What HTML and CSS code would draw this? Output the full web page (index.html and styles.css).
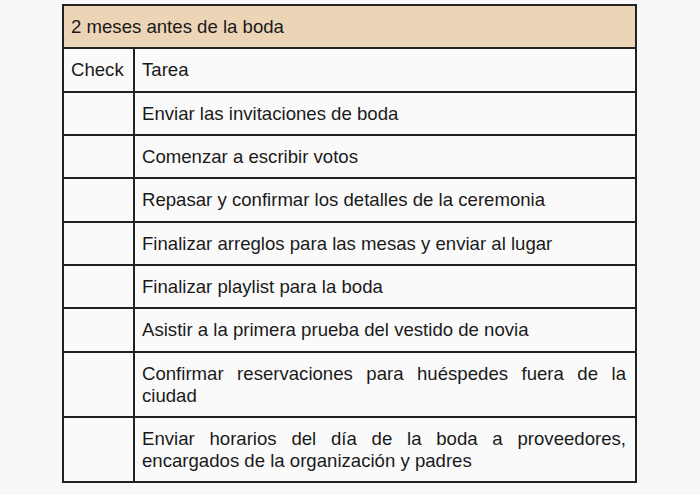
FILE: index.html
```html
<!DOCTYPE html>
<html lang="es">
<head>
<meta charset="utf-8">
<link rel="stylesheet" href="styles.css">
</head>
<body>
<table class="plan">
  <colgroup><col class="c-check"><col class="c-task"></colgroup>
  <tr class="head"><td colspan="2">2 meses antes de la boda</td></tr>
  <tr><td>Check</td><td>Tarea</td></tr>
  <tr><td></td><td>Enviar las invitaciones de boda</td></tr>
  <tr><td></td><td>Comenzar a escribir votos</td></tr>
  <tr><td></td><td>Repasar y confirmar los detalles de la ceremonia</td></tr>
  <tr><td></td><td>Finalizar arreglos para las mesas y enviar al lugar</td></tr>
  <tr><td></td><td>Finalizar playlist para la boda</td></tr>
  <tr><td></td><td>Asistir a la primera prueba del vestido de novia</td></tr>
  <tr><td></td><td class="just">Confirmar reservaciones para huéspedes fuera de la ciudad</td></tr>
  <tr><td></td><td class="just">Enviar horarios del día de la boda a proveedores, encargados de la organización y padres</td></tr>
</table>
</body>
</html>
```
FILE: styles.css
```css
html, body {
  margin: 0;
  background: #f8f8f8;
}
body {
  padding-top: 4px;
  font-family: "Liberation Sans", Arial, sans-serif;
  font-size: 18.6px;
  color: #1a1a1a;
}
.plan {
  border-collapse: collapse;
  margin-left: 62px;
  width: 575px;
  table-layout: fixed;
  background: #fafafa;
}
.c-check { width: 71px; }
.plan td {
  border: 2px solid #222;
  padding: 10px 8px 9.35px 7px;
  line-height: 22px;
  vertical-align: top;
}
.plan td.just {
  text-align: justify;
  padding-right: 9px;
}
.head td {
  background: #ecd5b7;
}
```
